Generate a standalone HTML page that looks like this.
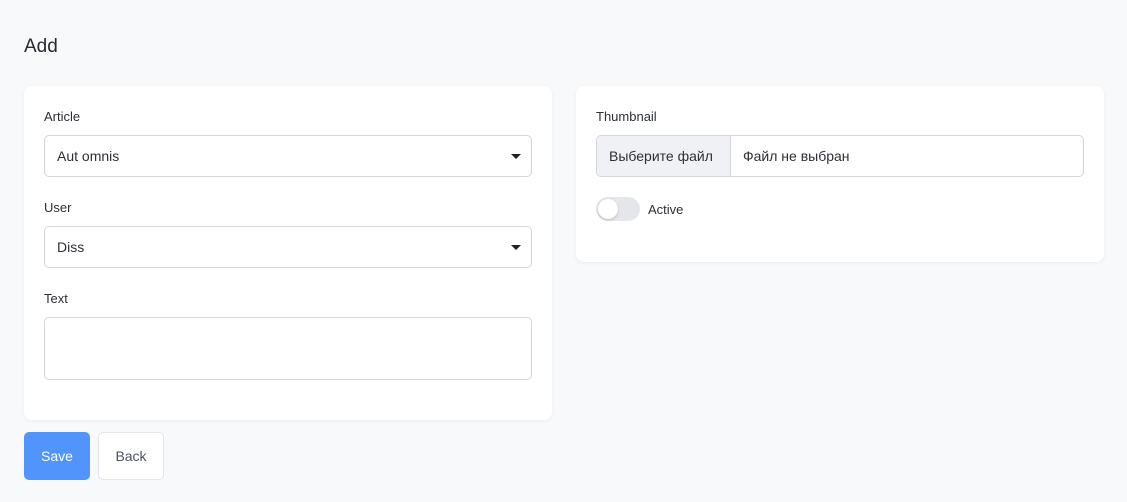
<!DOCTYPE html>
<html><head><meta charset="utf-8"><style>
*{box-sizing:border-box;margin:0;padding:0}
body{width:1127px;height:502px;background:#f8f9fb;font-family:"Liberation Sans",sans-serif;color:#2c2f36;position:relative;overflow:hidden}
.abs{position:absolute}
h1{position:absolute;left:24px;top:36px;font-size:19px;font-weight:normal;color:#252a33}
.card{position:absolute;background:#fff;border-radius:8px;box-shadow:0 1px 4px rgba(0,0,0,.06)}
.lbl{position:absolute;font-size:13px;color:#2c2f36}
.inp{position:absolute;border:1px solid #d4d6db;border-radius:5px;background:#fff;font-size:14px;color:#2c2f36}
.inp span{position:absolute;left:12px;top:12px}
.car{position:absolute;right:10px;top:18px;width:0;height:0;border-left:5px solid transparent;border-right:5px solid transparent;border-top:5px solid #222}
</style></head><body>
<h1>Add</h1>
<div class="card" style="left:24px;top:86px;width:528px;height:334px"></div>
<div class="lbl" style="left:44px;top:109px">Article</div>
<div class="inp" style="left:44px;top:135px;width:488px;height:42px"><span>Aut omnis</span><div class="car"></div></div>
<div class="lbl" style="left:44px;top:200px">User</div>
<div class="inp" style="left:44px;top:226px;width:488px;height:42px"><span>Diss</span><div class="car"></div></div>
<div class="lbl" style="left:44px;top:291px">Text</div>
<div class="inp" style="left:44px;top:317px;width:488px;height:63px"></div>

<div class="card" style="left:576px;top:86px;width:528px;height:176px"></div>
<div class="lbl" style="left:596px;top:109px">Thumbnail</div>
<div class="inp" style="left:596px;top:135px;width:488px;height:42px;overflow:hidden">
<div style="position:absolute;left:0;top:0;width:134px;height:40px;background:#eff1f5;border-right:1px solid #d4d6db"></div>
<span>Выберите файл</span><span style="left:146px">Файл не выбран</span></div>
<div class="abs" style="left:596px;top:197px;width:44px;height:24px;border-radius:12px;background:#e5e6ea"></div>
<div class="abs" style="left:598px;top:199px;width:20px;height:20px;border-radius:50%;background:#fff;box-shadow:0 1px 2px rgba(0,0,0,.2)"></div>
<div class="lbl" style="left:648px;top:202px">Active</div>

<div class="abs" style="left:24px;top:432px;width:66px;height:48px;border-radius:5px;background:#5194fb;color:#fff;font-size:14px;text-align:center;line-height:48px">Save</div>
<div class="abs" style="left:98px;top:432px;width:66px;height:48px;border-radius:5px;background:#fff;border:1px solid #e3e5ea;color:#4b5260;font-size:14px;text-align:center;line-height:46px">Back</div>
</body></html>
